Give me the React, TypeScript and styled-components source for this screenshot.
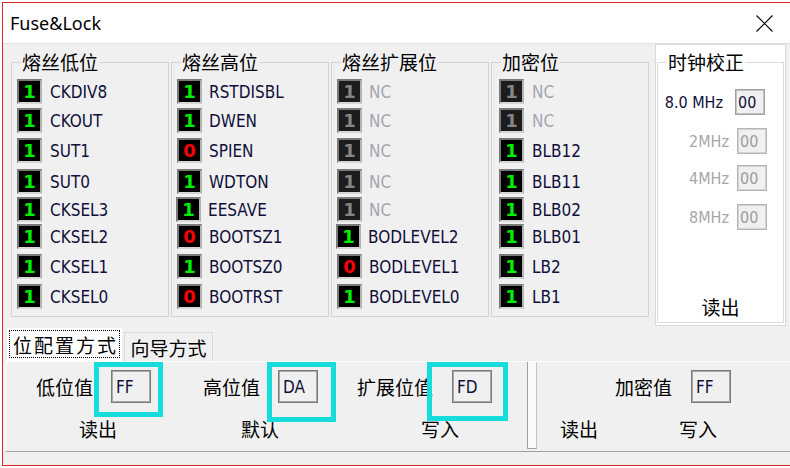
import React from "react";
import styled, { createGlobalStyle } from "styled-components";

const CJK = `"Noto Sans CJK SC", "Noto Sans", sans-serif`;
const LATIN = `"DejaVu Sans Condensed", "DejaVu Sans", sans-serif`;

const Global = createGlobalStyle`
  html, body { margin: 0; padding: 0; background: #fff; }
  body { width: 790px; height: 468px; overflow: hidden; }
  #root { width: 790px; height: 468px; }
`;

const Screen = styled.div`
  width: 790px;
  height: 468px;
  box-sizing: border-box;
  padding: 2px 0 0 2px;
  background: #fff;
  overflow: hidden;
`;

const Window = styled.div`
  width: 788px;
  height: 464px;
  box-sizing: border-box;
  border: 1px solid #e0262b;
  border-right: none;
  display: flex;
  flex-direction: column;
  background: #f0f0f0;
`;

const TitleBar = styled.div`
  height: 40px;
  flex: none;
  background: #fff;
  display: flex;
  align-items: center;
  padding-left: 7px;
  padding-right: 17px;
`;

const Title = styled.div`
  font-family: "Noto Sans", sans-serif;
  font-size: 18px;
  color: #000;
`;

const Close = styled.div`
  margin-left: auto;
  width: 17px;
  height: 17px;
  display: flex;
`;

const Body = styled.div`
  flex: 1;
  display: flex;
  flex-direction: column;
  border-top: 1px solid #e3e3e3;
`;

const TopArea = styled.div`
  display: flex;
  align-items: flex-start;
  padding-left: 8px;
  height: 282px;
`;

const FuseGroups = styled.div`
  display: flex;
  gap: 2px;
  margin-top: 7px;
`;

const Frame = styled.fieldset`
  margin: 0;
  padding: 0;
  min-width: 0;
  box-sizing: border-box;
  border: 1px solid #d3d3d3;
`;

const FuseFrame = styled(Frame)`
  width: 158px;
  height: 266px;
`;

const Legend = styled.legend`
  font-family: ${CJK};
  font-size: 19px;
  line-height: 22px;
  color: #000;
  padding: 0 1px;
  margin-left: 9px;
`;

const RowList = styled.div<{ $pad: number }>`
  display: flex;
  flex-direction: column;
  padding: 6px 0 0 ${(p) => p.$pad}px;
`;

const FuseRow = styled.div<{ $gap: number; $shift: number }>`
  display: flex;
  align-items: center;
  height: 25px;
  margin-top: ${(p) => p.$gap}px;
  margin-left: ${(p) => p.$shift}px;
`;

const Led = styled.div<{ $v: number; $off?: boolean }>`
  width: 25px;
  height: 25px;
  flex: none;
  box-sizing: border-box;
  border-top: 2px solid #7a7a7a;
  border-left: 2px solid #7a7a7a;
  border-right: 2px solid #b4b4b4;
  border-bottom: 2px solid #d6d6d6;
  background: ${(p) => (p.$off ? "#1c1c1c" : "#000")};
  color: ${(p) => (p.$off ? "#858585" : p.$v ? "#00f000" : "#ff0000")};
  font-family: "DejaVu Sans", sans-serif;
  font-weight: bold;
  font-size: 18px;
  line-height: 1;
  display: flex;
  align-items: center;
  justify-content: center;
`;

const FuseLabel = styled.span<{ $gap: number; $off?: boolean }>`
  margin-left: ${(p) => p.$gap}px;
  font-family: ${LATIN};
  font-size: 17px;
  color: ${(p) => (p.$off ? "#a3a6b0" : "#10103a")};
  white-space: nowrap;
`;

const ClockPanel = styled.div`
  margin-left: 6px;
  width: 131px;
  height: 282px;
  box-sizing: border-box;
  border: 1px solid #d9d9d9;
  background: #fff;
  padding: 6px 0 0 1px;
`;

const ClockFrame = styled(Frame)`
  width: 127px;
  height: 272px;
  border-color: #dcdcdc;
  display: flex;
  flex-direction: column;
`;

const ClockRow = styled.div<{ $gap: number; $right: number; $space: number }>`
  display: flex;
  align-items: center;
  justify-content: flex-end;
  height: 26px;
  margin-top: ${(p) => p.$gap}px;
  padding-right: ${(p) => p.$right}px;
  gap: ${(p) => p.$space}px;
`;

const ClockLabel = styled.span<{ $off?: boolean }>`
  font-family: ${LATIN};
  font-size: 16px;
  color: ${(p) => (p.$off ? "#a6a6a6" : "#10103a")};
  white-space: nowrap;
`;

const ClockInput = styled.div<{ $off?: boolean }>`
  width: 30px;
  height: 26px;
  box-sizing: border-box;
  border: 1px solid ${(p) => (p.$off ? "#b4b4b4" : "#a0a0a0")};
  box-shadow: inset 0 0 0 1px ${(p) => (p.$off ? "#d4d4d4" : "#c4c4c4")};
  background: #f0f0f0;
  padding-left: 2px;
  display: flex;
  align-items: center;
  font-family: ${LATIN};
  font-size: 16px;
  color: ${(p) => (p.$off ? "#9c9ca4" : "#10103a")};
`;

const CjkText = styled.span`
  font-family: ${CJK};
  font-size: 19px;
  line-height: 22px;
  color: #000;
  white-space: nowrap;
`;

const ClockRead = styled(CjkText)`
  margin-top: auto;
  margin-bottom: 4px;
  align-self: center;
`;

const TabRow = styled.div`
  display: flex;
  align-items: flex-end;
  height: 33px;
  margin-top: 2px;
  padding-left: 4px;
`;

const Tab = styled.div<{ $active?: boolean }>`
  box-sizing: border-box;
  width: ${(p) => (p.$active ? 115 : 89)}px;
  height: ${(p) => (p.$active ? 33 : 29)}px;
  margin-left: ${(p) => (p.$active ? 0 : 2)}px;
  background: ${(p) => (p.$active ? "#fff" : "#f0f0f0")};
  border: 1px solid ${(p) => (p.$active ? "#fff" : "#d9d9d9")};
  border-bottom: none;
  display: flex;
  align-items: ${(p) => (p.$active ? "flex-start" : "center")};
  justify-content: center;
  font-family: ${CJK};
  font-size: 19px;
  color: #000;
  white-space: nowrap;
`;

const FocusRing = styled.div`
  margin-top: 1px;
  width: 111px;
  height: 28px;
  box-sizing: border-box;
  border: 1px dotted #000;
  display: flex;
  align-items: center;
  justify-content: center;
  letter-spacing: 2px;
  padding-left: 2px;
  white-space: nowrap;
  overflow: hidden;
`;

const TabPanel = styled.div`
  margin-left: 2px;
  height: 91px;
  box-sizing: border-box;
  border-top: 1px solid #fff;
  border-left: 1px solid #fff;
  border-bottom: 1px solid #a0a0a0;
  display: flex;
  align-items: flex-start;
`;

const LeftSection = styled.div`
  width: 521px;
  flex: none;
  display: flex;
  padding: 8px 0 0 30px;
  box-sizing: border-box;
`;

const Field = styled.div<{ $lead: number }>`
  display: flex;
  flex-direction: column;
  margin-left: ${(p) => p.$lead}px;
`;

const FieldTop = styled.div<{ $gap: number }>`
  display: flex;
  align-items: center;
  gap: ${(p) => p.$gap}px;
`;

const Caption = styled(CjkText)<{ $left: number }>`
  margin-top: 15px;
  margin-left: ${(p) => p.$left}px;
`;

const InputSlot = styled.div`
  position: relative;
`;

const ValueBox = styled.div`
  width: 40px;
  height: 33px;
  box-sizing: border-box;
  border: 1px solid #7a7a7a;
  box-shadow: inset 0 0 0 1px #a9a9a9;
  background: #f0f0f0;
  padding-left: 4px;
  display: flex;
  align-items: center;
  font-family: ${LATIN};
  font-size: 17px;
  color: #10103a;
`;

const Highlight = styled.div<{ $l: number; $w: number; $h: number }>`
  position: absolute;
  left: ${(p) => p.$l}px;
  top: -8px;
  width: ${(p) => p.$w}px;
  height: ${(p) => p.$h}px;
  box-sizing: border-box;
  border: 5px solid #16dcdc;
  pointer-events: none;
  z-index: 2;
`;

const Separator = styled.div`
  width: 10px;
  height: 87px;
  flex: none;
  box-sizing: border-box;
  border-left: 1px solid #a0a0a0;
  border-right: 1px solid #c4c4c4;
  border-bottom: 1px solid #a0a0a0;
  background: #f9f9f9;
`;

const RightSection = styled.div`
  display: flex;
  flex-direction: column;
  padding-top: 8px;
`;

const RightRow = styled.div<{ $left: number; $gap: number; $top: number }>`
  display: flex;
  align-items: center;
  margin-left: ${(p) => p.$left}px;
  margin-top: ${(p) => p.$top}px;
  gap: ${(p) => p.$gap}px;
`;

type Bit = { v: number; name: string; off?: boolean; shift?: number };

const gaps = [0, 4, 5, 6, 3, 2, 5, 5];

const groups: { title: string; pad: number; labelGap: number; bits: Bit[] }[] = [
  {
    title: "熔丝低位",
    pad: 5,
    labelGap: 8,
    bits: [
      { v: 1, name: "CKDIV8" },
      { v: 1, name: "CKOUT" },
      { v: 1, name: "SUT1" },
      { v: 1, name: "SUT0" },
      { v: 1, name: "CKSEL3" },
      { v: 1, name: "CKSEL2" },
      { v: 1, name: "CKSEL1" },
      { v: 1, name: "CKSEL0" },
    ],
  },
  {
    title: "熔丝高位",
    pad: 5,
    labelGap: 7,
    bits: [
      { v: 1, name: "RSTDISBL" },
      { v: 1, name: "DWEN" },
      { v: 0, name: "SPIEN" },
      { v: 1, name: "WDTON" },
      { v: 1, name: "EESAVE", shift: -1 },
      { v: 0, name: "BOOTSZ1" },
      { v: 1, name: "BOOTSZ0" },
      { v: 0, name: "BOOTRST" },
    ],
  },
  {
    title: "熔丝扩展位",
    pad: 5,
    labelGap: 7,
    bits: [
      { v: 1, name: "NC", off: true },
      { v: 1, name: "NC", off: true },
      { v: 1, name: "NC", off: true },
      { v: 1, name: "NC", off: true },
      { v: 1, name: "NC", off: true },
      { v: 1, name: "BODLEVEL2", shift: -1 },
      { v: 0, name: "BODLEVEL1" },
      { v: 1, name: "BODLEVEL0" },
    ],
  },
  {
    title: "加密位",
    pad: 7,
    labelGap: 8,
    bits: [
      { v: 1, name: "NC", off: true },
      { v: 1, name: "NC", off: true },
      { v: 1, name: "BLB12" },
      { v: 1, name: "BLB11" },
      { v: 1, name: "BLB02" },
      { v: 1, name: "BLB01" },
      { v: 1, name: "LB2" },
      { v: 1, name: "LB1" },
    ],
  },
];

const clockRows = [
  { label: "8.0 MHz", gap: 16, right: 18, space: 12, off: false },
  { label: "2MHz", gap: 13, right: 16, space: 8, off: true },
  { label: "4MHz", gap: 11, right: 16, space: 8, off: true },
  { label: "8MHz", gap: 13, right: 16, space: 8, off: true },
];

const fields = [
  { label: "低位值", value: "FF", lead: 0, cap: "读出", capLeft: 43, hl: { l: -17, w: 69, h: 55 } },
  { label: "高位值", value: "DA", lead: 52, cap: "默认", capLeft: 38, hl: { l: -11, w: 69, h: 60 } },
  { label: "扩展位值", value: "FD", lead: 39, cap: "写入", capLeft: 64, hl: { l: -25, w: 81, h: 59 } },
];

export default function App() {
  return (
    <>
      <Global />
      <Screen>
        <Window>
          <TitleBar>
            <Title>Fuse&amp;Lock</Title>
            <Close>
              <svg width="17" height="17" viewBox="0 0 17 17">
                <path d="M0.5 0.5 L16.5 16.5 M16.5 0.5 L0.5 16.5" stroke="#000" strokeWidth="1.1" fill="none" />
              </svg>
            </Close>
          </TitleBar>
          <Body>
            <TopArea>
              <FuseGroups>
                {groups.map((g) => (
                  <FuseFrame key={g.title}>
                    <Legend>{g.title}</Legend>
                    <RowList $pad={g.pad}>
                      {g.bits.map((b, i) => (
                        <FuseRow key={i} $gap={gaps[i]} $shift={b.shift ?? 0}>
                          <Led $v={b.v} $off={b.off}>{b.v}</Led>
                          <FuseLabel $gap={g.labelGap} $off={b.off}>{b.name}</FuseLabel>
                        </FuseRow>
                      ))}
                    </RowList>
                  </FuseFrame>
                ))}
              </FuseGroups>
              <ClockPanel>
                <ClockFrame>
                  <Legend>时钟校正</Legend>
                  {clockRows.map((r) => (
                    <ClockRow key={r.label} $gap={r.gap} $right={r.right} $space={r.space}>
                      <ClockLabel $off={r.off}>{r.label}</ClockLabel>
                      <ClockInput $off={r.off}>00</ClockInput>
                    </ClockRow>
                  ))}
                  <ClockRead>读出</ClockRead>
                </ClockFrame>
              </ClockPanel>
            </TopArea>
            <TabRow>
              <Tab $active>
                <FocusRing>位配置方式</FocusRing>
              </Tab>
              <Tab>向导方式</Tab>
            </TabRow>
            <TabPanel>
              <LeftSection>
                {fields.map((f) => (
                  <Field key={f.label} $lead={f.lead}>
                    <FieldTop $gap={f.label.length > 3 ? 19 : 18}>
                      <CjkText>{f.label}</CjkText>
                      <InputSlot>
                        <ValueBox>{f.value}</ValueBox>
                        <Highlight $l={f.hl.l} $w={f.hl.w} $h={f.hl.h} />
                      </InputSlot>
                    </FieldTop>
                    <Caption $left={f.capLeft}>{f.cap}</Caption>
                  </Field>
                ))}
              </LeftSection>
              <Separator />
              <RightSection>
                <RightRow $left={78} $gap={19} $top={0}>
                  <CjkText>加密值</CjkText>
                  <ValueBox>FF</ValueBox>
                </RightRow>
                <RightRow $left={23} $gap={81} $top={15}>
                  <CjkText>读出</CjkText>
                  <CjkText>写入</CjkText>
                </RightRow>
              </RightSection>
            </TabPanel>
          </Body>
        </Window>
      </Screen>
    </>
  );
}
